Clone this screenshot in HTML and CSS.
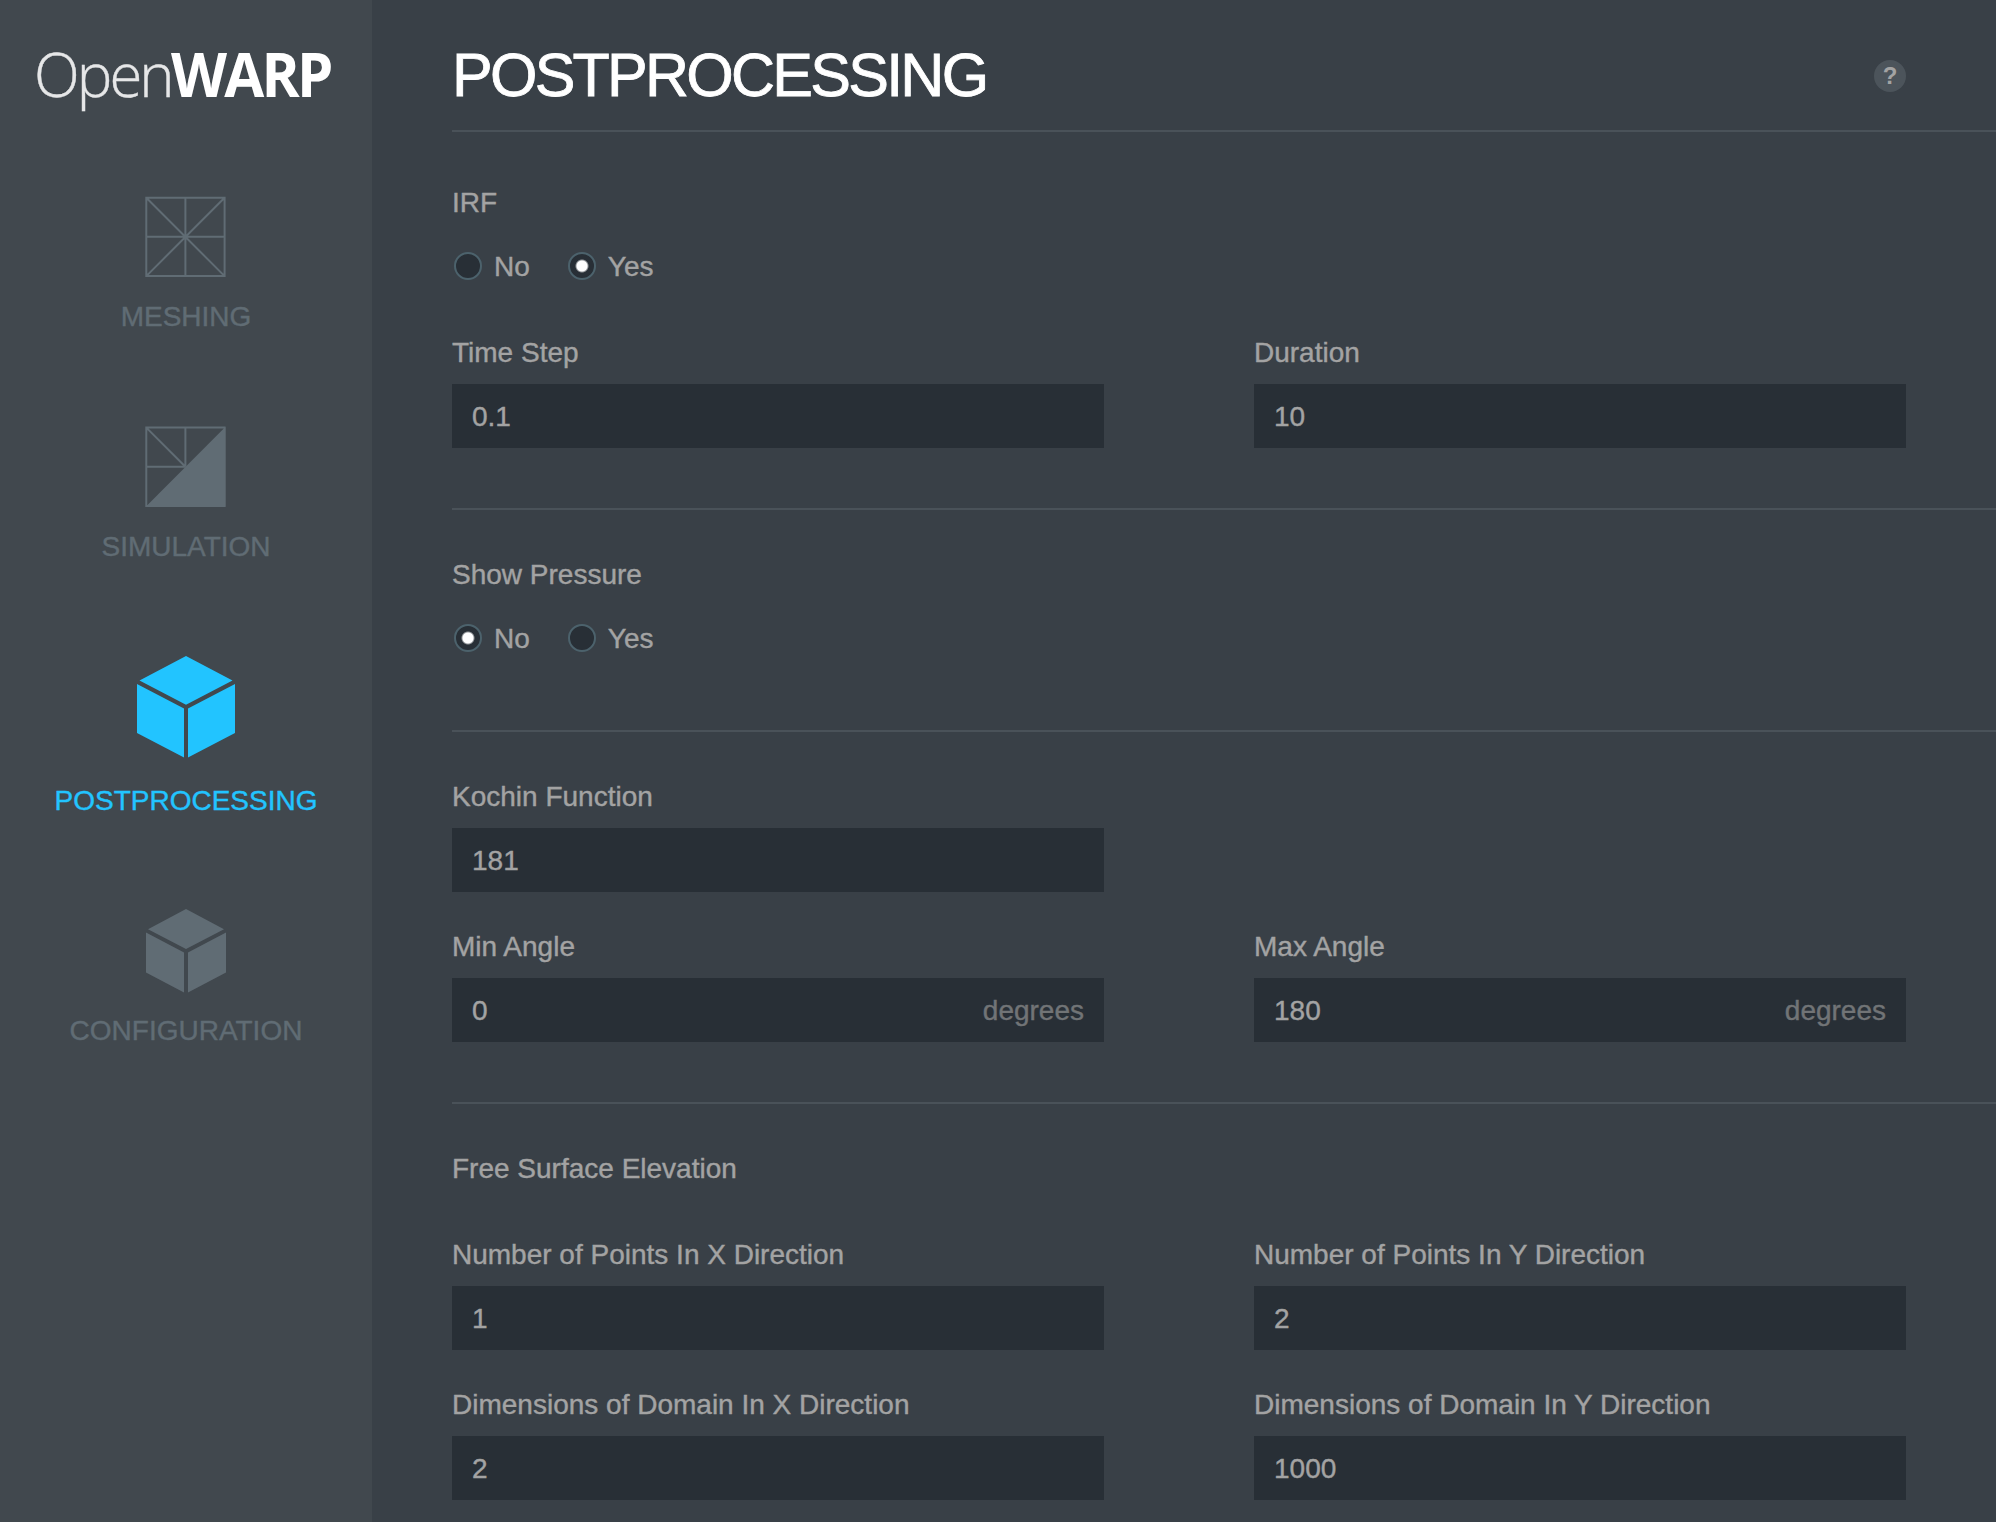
FILE: index.html
```html
<!DOCTYPE html>
<html lang="en">
<head>
<meta charset="utf-8">
<title>OpenWARP</title>
<link rel="stylesheet" href="styles.css">
</head>
<body>
<div class="app">
  <aside class="sidebar">
    <div class="logo"><span class="logo-open">Open</span><span class="logo-warp">WARP</span></div>
    <nav class="nav">
      <a class="nav-item">
        <svg class="icon" width="82" height="82" viewBox="0 0 82 82" fill="none" stroke="currentColor" stroke-width="2"><path d="M1.300 1.800h78.300v78.300h-78.300zM40.400 1.800v78.300M1.300 40.700h78.300M1.300 1.800l78.300 78.300M79.600 1.800l-78.300 78.300"/><circle cx="40.400" cy="40.900" r="2.200" fill="currentColor" stroke="none"/></svg>
        <span class="nav-label">MESHING</span>
      </a>
      <a class="nav-item">
        <svg class="icon" width="82" height="82" viewBox="0 0 82 82" fill="none" stroke="currentColor" stroke-width="2"><path d="M1.300 1.600h78.300v78.300h-78.300zM40.400 1.600v39.100M1.300 40.700h39.100M1.300 1.600l39.100 39.100"/><path d="M80.300 1v79.500H1z" fill="currentColor" stroke="none"/></svg>
        <span class="nav-label">SIMULATION</span>
      </a>
      <a class="nav-item active">
        <svg class="icon" width="98" height="102" viewBox="0 0 98 102" fill="currentColor"><path d="M49 0l46.500 24.500L49 48.700 2.500 24.500zM0 28l47 24.500v49L0 77zM98 28L51 52.500v49L98 77z"/></svg>
        <span class="nav-label">POSTPROCESSING</span>
      </a>
      <a class="nav-item">
        <svg class="icon" width="80" height="84" viewBox="0 0 80 84" fill="currentColor"><path d="M40 0l38 20.300L40 40 2 20.300zM0 23.500l38 20v40L0 63.500zM80 23.500l-38 20v40l38-20z"/></svg>
        <span class="nav-label">CONFIGURATION</span>
      </a>
    </nav>
  </aside>
  <main class="main">
    <header class="header">
      <h1>POSTPROCESSING</h1>
      <span class="help">?</span>
    </header>
    <section class="section first">
      <div class="label">IRF</div>
      <div class="radios">
        <span class="radio"><i class="dot"></i>No</span>
        <span class="radio"><i class="dot on"></i>Yes</span>
      </div>
      <div class="row after-wide">
        <div class="field"><div class="label">Time Step</div><div class="input">0.1</div></div>
        <div class="field"><div class="label">Duration</div><div class="input">10</div></div>
      </div>
    </section>
    <section class="section pressure">
      <div class="label">Show Pressure</div>
      <div class="radios">
        <span class="radio"><i class="dot on"></i>No</span>
        <span class="radio"><i class="dot"></i>Yes</span>
      </div>
    </section>
    <section class="section">
      <div class="row">
        <div class="field"><div class="label">Kochin Function</div><div class="input">181</div></div>
      </div>
      <div class="row after">
        <div class="field"><div class="label">Min Angle</div><div class="input">0<span class="unit">degrees</span></div></div>
        <div class="field"><div class="label">Max Angle</div><div class="input">180<span class="unit">degrees</span></div></div>
      </div>
    </section>
    <section class="section last">
      <div class="label">Free Surface Elevation</div>
      <div class="row after-wide">
        <div class="field"><div class="label">Number of Points In X Direction</div><div class="input">1</div></div>
        <div class="field"><div class="label">Number of Points In Y Direction</div><div class="input">2</div></div>
      </div>
      <div class="row after">
        <div class="field"><div class="label">Dimensions of Domain In X Direction</div><div class="input">2</div></div>
        <div class="field"><div class="label">Dimensions of Domain In Y Direction</div><div class="input">1000</div></div>
      </div>
    </section>
  </main>
</div>
</body>
</html>
```

FILE: styles.css
```css
* { box-sizing: border-box; }
body {
  margin: 0;
  background: #394047;
  color: #a3a3a3;
  font: 28px/33px "Liberation Sans", Arial, sans-serif;
  -webkit-text-stroke: 0.4px currentColor;
}
.app { display: flex; height: 1522px; overflow: hidden; }

.sidebar {
  width: 372px;
  flex: none;
  background: #41484e;
  color: #606c74;
}
.logo {
  height: 196px;
  padding: 32px 0 0 34px;
  font: 300 61px/84px "Open Sans", "Noto Sans", sans-serif;
  color: #fff;
  white-space: nowrap;
}
.logo-open,
.logo-warp { display: inline-block; transform-origin: 0 50%; }
.logo-open { transform: scaleX(0.98); letter-spacing: -3px; color: #e6e7e8; }
.logo-warp {
  transform: scaleX(0.95);
  margin-left: -3px;
  font-weight: 700;
  letter-spacing: -2.9px;
  -webkit-text-stroke: 0;
}
.nav { display: flex; flex-direction: column; gap: 94px; }
.nav-item { display: flex; flex-direction: column; align-items: center; gap: 22px; }
.nav-item.active { color: #22c4ff; gap: 26px; }
.nav-item:last-child { gap: 21px; margin-top: -1px; }
.nav-label, .label { height: 32px; }
.icon { display: block; }

.main { flex: 1; padding-left: 80px; }
.header {
  display: flex;
  justify-content: space-between;
  align-items: center;
  height: 132px;
  padding: 22px 90px 0 0;
  border-bottom: 2px solid #4a5259;
}
h1 {
  margin: 0 0 2px;
  font-size: 61px;
  font-weight: 400;
  letter-spacing: -2.75px;
  color: #fff;
  -webkit-text-stroke: 0.8px currentColor;
}
.help {
  width: 32px;
  height: 32px;
  border-radius: 50%;
  background: #4c545b;
  font-size: 24px;
  font-weight: 700;
  line-height: 31px;
  text-align: center;
  -webkit-text-stroke: 0;
}
.section { padding: 48px 90px 60px 0; border-bottom: 2px solid #4a5259; }
.section.first { padding-top: 54px; }
.section.pressure { padding-bottom: 76px; }
.section.last { border: 0; padding-bottom: 0; }
.radios { display: flex; gap: 36px; height: 32px; margin-top: 32px; }
.radio { display: flex; gap: 12px; }
.dot {
  width: 28px;
  height: 28px;
  margin: 2px 0 0 2px;
  border: 2px solid #4c626c;
  border-radius: 50%;
  background: #282f36;
}
.dot.on { background: radial-gradient(circle, #fff 5px, #282f36 7px); }
.row { display: flex; gap: 150px; }
.after { margin-top: 38px; }
.after-wide { margin-top: 54px; }
.field { width: 652px; }
.input {
  display: flex;
  justify-content: space-between;
  height: 64px;
  margin-top: 16px;
  padding: 16px 20px 15px;
  background: #282f36;
}
.unit { color: #717476; }
```
